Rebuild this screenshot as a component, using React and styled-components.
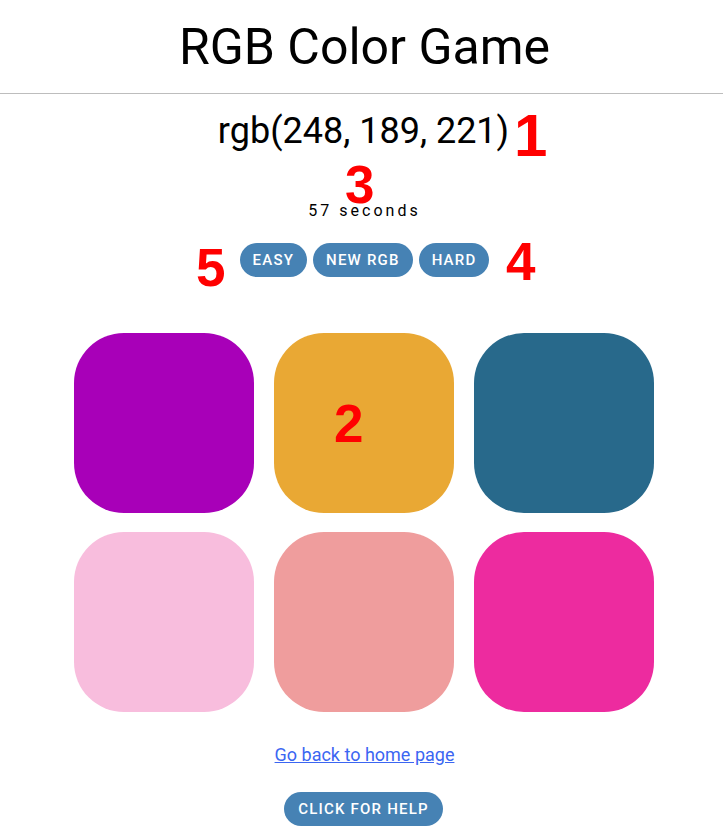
import React from "react";
import styled, { createGlobalStyle } from "styled-components";

const GlobalStyle = createGlobalStyle`
  body {
    margin: 0;
    font-family: Roboto, "Liberation Sans", sans-serif;
    background: #fff;
    color: #000;
  }
`;

const colors = [
  "rgb(168, 0, 184)",
  "rgb(233, 168, 52)",
  "rgb(40, 105, 139)",
  "rgb(248, 189, 221)",
  "rgb(239, 157, 157)",
  "rgb(237, 43, 159)",
];

const App = () => {
  return (
    <Page>
      <GlobalStyle />
      <Header>
        <Title>RGB Color Game</Title>
      </Header>
      <Main>
        <Target>rgb(248, 189, 221)</Target>
        <Timer>57 seconds</Timer>
        <Controls>
          <Pill>Easy</Pill>
          <Pill>New RGB</Pill>
          <Pill>Hard</Pill>
        </Controls>
        <Grid>
          {colors.map((c) => (
            <Square key={c} style={{ background: c }} />
          ))}
        </Grid>
        <HomeLink href="#">Go back to home page</HomeLink>
        <Pill $wide>Click for help</Pill>
      </Main>
      <Marker $x={514} $y={106} $size={60}>1</Marker>
      <Marker $x={345} $y={158} $size={53}>3</Marker>
      <Marker $x={196} $y={241} $size={53}>5</Marker>
      <Marker $x={506} $y={235} $size={53}>4</Marker>
      <Marker $x={334} $y={397} $size={53}>2</Marker>
    </Page>
  );
};

export default App;

const Page = styled.div`
  position: relative;
  min-height: 826px;
  overflow: hidden;
`;

const Header = styled.header`
  border-bottom: 1px solid #bdbdbd;
  padding-left: 6px;
  height: 93px;
  display: flex;
  align-items: center;
  justify-content: center;
`;

const Title = styled.h1`
  margin: 0;
  font-size: 50px;
  font-weight: 400;
  line-height: 1;
`;

const Main = styled.main`
  padding-left: 4px;
  display: flex;
  flex-direction: column;
  align-items: center;
`;

const Target = styled.div`
  margin-top: 16px;
  font-size: 36px;
  line-height: 42px;
`;

const Timer = styled.div`
  margin-top: 49px;
  padding-left: 2px;
  font-size: 16px;
  letter-spacing: 3px;
  line-height: 20px;
`;

const Controls = styled.div`
  margin-top: 22px;
  padding-left: 2px;
  display: flex;
  gap: 6px;
`;

const Pill = styled.button`
  background: #4682b4;
  color: #fff;
  border: none;
  border-radius: 18px;
  height: 34px;
  padding: 0 ${(p) => (p.$wide ? 14 : 13)}px;
  font-family: Roboto, "Liberation Sans", sans-serif;
  font-size: 15px;
  font-weight: 500;
  letter-spacing: 1.2px;
  text-transform: uppercase;
  cursor: pointer;
`;

const Grid = styled.div`
  margin-top: 56px;
  display: grid;
  grid-template-columns: repeat(3, 180px);
  column-gap: 20px;
  row-gap: 19px;
`;

const Square = styled.div`
  width: 180px;
  height: 180px;
  border-radius: 50px;
`;

const HomeLink = styled.a`
  margin-top: 32px;
  margin-bottom: 26px;
  padding-left: 2px;
  font-size: 18px;
  line-height: 22px;
  color: #3b66f2;
  text-decoration: underline;
`;

const Marker = styled.span`
  position: absolute;
  left: ${(p) => p.$x}px;
  top: ${(p) => p.$y}px;
  font-family: "Liberation Sans", Arial, sans-serif;
  font-weight: 700;
  font-size: ${(p) => p.$size}px;
  line-height: 1;
  color: #ff0000;
`;
